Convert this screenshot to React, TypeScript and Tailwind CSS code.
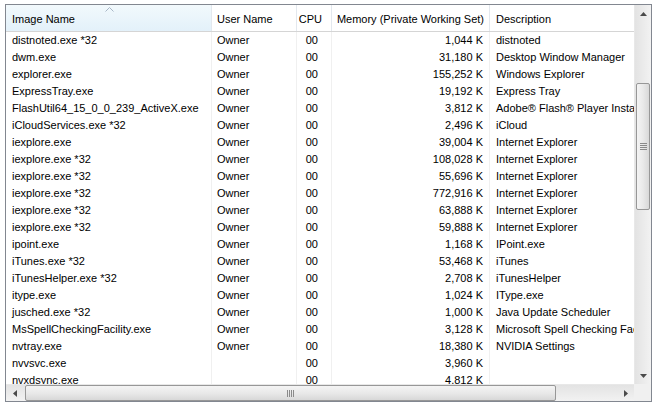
import React from "react";

type Row = [string, string, string, string, string];

const rows: Row[] = [
  ["distnoted.exe *32", "Owner", "00", "1,044 K", "distnoted"],
  ["dwm.exe", "Owner", "00", "31,180 K", "Desktop Window Manager"],
  ["explorer.exe", "Owner", "00", "155,252 K", "Windows Explorer"],
  ["ExpressTray.exe", "Owner", "00", "19,192 K", "Express Tray"],
  ["FlashUtil64_15_0_0_239_ActiveX.exe", "Owner", "00", "3,812 K", "Adobe® Flash® Player Installer/Uninstaller"],
  ["iCloudServices.exe *32", "Owner", "00", "2,496 K", "iCloud"],
  ["iexplore.exe", "Owner", "00", "39,004 K", "Internet Explorer"],
  ["iexplore.exe *32", "Owner", "00", "108,028 K", "Internet Explorer"],
  ["iexplore.exe *32", "Owner", "00", "55,696 K", "Internet Explorer"],
  ["iexplore.exe *32", "Owner", "00", "772,916 K", "Internet Explorer"],
  ["iexplore.exe *32", "Owner", "00", "63,888 K", "Internet Explorer"],
  ["iexplore.exe *32", "Owner", "00", "59,888 K", "Internet Explorer"],
  ["ipoint.exe", "Owner", "00", "1,168 K", "IPoint.exe"],
  ["iTunes.exe *32", "Owner", "00", "53,468 K", "iTunes"],
  ["iTunesHelper.exe *32", "Owner", "00", "2,708 K", "iTunesHelper"],
  ["itype.exe", "Owner", "00", "1,024 K", "IType.exe"],
  ["jusched.exe *32", "Owner", "00", "1,000 K", "Java Update Scheduler"],
  ["MsSpellCheckingFacility.exe", "Owner", "00", "3,128 K", "Microsoft Spell Checking Facility Service Host"],
  ["nvtray.exe", "Owner", "00", "18,380 K", "NVIDIA Settings"],
  ["nvvsvc.exe", "", "00", "3,960 K", ""],
  ["nvxdsync.exe", "", "00", "4,812 K", ""],
];

function Tri({ dir }: { dir: "up" | "down" | "left" | "right" }) {
  const pts =
    dir === "up"
      ? "0,4 7,4 3.5,0"
      : dir === "down"
      ? "0,0 7,0 3.5,4"
      : dir === "left"
      ? "4,0 4,7 0,3.5"
      : "0,0 0,7 4,3.5";
  const w = dir === "up" || dir === "down" ? 7 : 4;
  const h = dir === "up" || dir === "down" ? 4 : 7;
  return (
    <svg width={w} height={h} viewBox={`0 0 ${w} ${h}`}>
      <polygon points={pts} fill="#4a4a4a" />
    </svg>
  );
}

export default function App() {
  return (
    <div
      className="w-[652px] h-[406px] bg-white overflow-hidden text-[11px] text-black"
      style={{ fontFamily: '"Liberation Sans", Arial, sans-serif' }}
    >
      <div className="ml-[5px] mt-[4px] w-[647px] h-[398px] border border-[#828790] flex flex-col">
        <div className="flex flex-1 min-h-0">
          <div className="flex-1 min-w-0 overflow-hidden flex flex-col">
            {/* header */}
            <div className="flex h-[27px] shrink-0 border-b border-[#d5d5d5] bg-white">
              <div className="relative w-[206px] shrink-0 border-r border-[#e3e8ee] bg-gradient-to-b from-[#f2f9fc] to-[#e3f1fa] flex items-center pt-[3px] pl-[6px]">
                <svg
                  className="absolute left-[99px] top-[2px]"
                  width="9"
                  height="5"
                  viewBox="0 0 9 5"
                >
                  <polyline points="0.5,4.5 4.5,0.5 8.5,4.5" fill="none" stroke="#a8b6c6" strokeWidth="1" />
                </svg>
                Image Name
              </div>
              <div className="w-[85px] shrink-0 border-r border-[#e3e8ee] flex items-center pt-[3px] pl-[5px]">User Name</div>
              <div className="w-[35px] shrink-0 border-r border-[#e3e8ee] flex items-center pt-[3px] justify-end pr-[9px]">CPU</div>
              <div className="w-[158px] shrink-0 border-r border-[#e3e8ee] flex items-center pt-[3px] justify-end pr-[5px] whitespace-nowrap">
                Memory (Private Working Set)
              </div>
              <div className="flex-1 min-w-0 flex items-center pt-[3px] pl-[6px]">Description</div>
            </div>
            {/* body */}
            <div className="flex-1 min-h-0 overflow-hidden">
              {rows.map((r, i) => (
                <div key={i} className="flex h-[17px]">
                  <div className="w-[206px] shrink-0 border-r border-[#f0f0f0] pl-[6px] leading-[17px] whitespace-nowrap overflow-hidden">
                    {r[0]}
                  </div>
                  <div className="w-[85px] shrink-0 border-r border-[#f0f0f0] pl-[5px] leading-[17px]">{r[1]}</div>
                  <div className="w-[35px] shrink-0 border-r border-[#f0f0f0] pr-[13px] text-right leading-[17px]">{r[2]}</div>
                  <div className="w-[158px] shrink-0 border-r border-[#f0f0f0] pr-[6px] text-right leading-[17px]">{r[3]}</div>
                  <div className="flex-1 min-w-0 pl-[6px] leading-[17px] whitespace-nowrap overflow-hidden">{r[4]}</div>
                </div>
              ))}
            </div>
          </div>
          {/* vertical scrollbar */}
          <div className="w-[17px] shrink-0 flex flex-col bg-gradient-to-r from-[#e3e3e3] to-[#f2f2f2] border-l border-[#e8e8e8]">
            <div className="h-[17px] flex items-center justify-center">
              <Tri dir="up" />
            </div>
            <div className="h-[61px]" />
            <div className="h-[127px] mx-[1px] rounded-[2px] border border-[#979797] bg-gradient-to-r from-[#f4f4f4] via-[#e9e9e9] to-[#d8d8d8] flex flex-col items-center justify-center gap-[1px]">
              <div className="w-[7px] h-[1px] bg-[#8a8a8a]" />
              <div className="w-[7px] h-[1px] bg-[#8a8a8a]" />
              <div className="w-[7px] h-[1px] bg-[#8a8a8a]" />
              <div className="w-[7px] h-[1px] bg-[#8a8a8a]" />
            </div>
            <div className="flex-1" />
            <div className="h-[17px] flex items-center justify-center">
              <Tri dir="down" />
            </div>
          </div>
        </div>
        {/* horizontal scrollbar */}
        <div className="flex h-[17px] shrink-0">
          <div className="flex-1 min-w-0 flex bg-gradient-to-b from-[#e3e3e3] to-[#f2f2f2] border-t border-[#e8e8e8]">
            <div className="w-[17px] flex items-center justify-center">
              <Tri dir="left" />
            </div>
            <div className="flex-1 flex items-stretch">
              <div className="ml-[2px] w-[531px] rounded-[2px] border border-[#979797] bg-gradient-to-b from-[#f4f4f4] via-[#e9e9e9] to-[#d8d8d8] flex items-center justify-center gap-[1px]">
                <div className="w-[1px] h-[7px] bg-[#8a8a8a]" />
                <div className="w-[1px] h-[7px] bg-[#8a8a8a]" />
                <div className="w-[1px] h-[7px] bg-[#8a8a8a]" />
                <div className="w-[1px] h-[7px] bg-[#8a8a8a]" />
              </div>
            </div>
            <div className="w-[17px] flex items-center justify-center">
              <Tri dir="right" />
            </div>
          </div>
          <div className="w-[17px] shrink-0 bg-[#f0f0f0]" />
        </div>
      </div>
    </div>
  );
}
